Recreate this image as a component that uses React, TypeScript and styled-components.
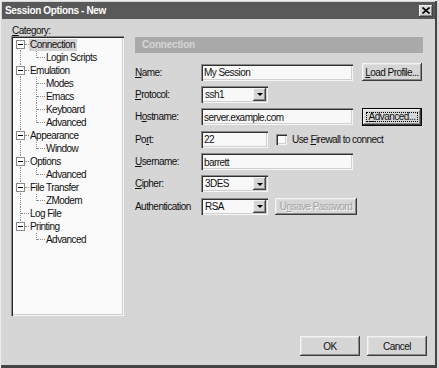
import styled, { createGlobalStyle, css } from 'styled-components';

const GlobalStyle = createGlobalStyle`
  html, body {
    margin: 0;
    background: #d8d8d8;
  }
  body {
    font-family: "Liberation Sans", Arial, sans-serif;
    font-size: 10px;
    letter-spacing: -0.55px;
    color: #101010;
  }
`;

const Window = styled.div`
  box-sizing: border-box;
  width: 437px;
  height: 368px;
  padding: 2px 2px 3px 2px;
  display: flex;
  flex-direction: column;
  background: #d6d6d6;
  box-shadow: inset 1px 1px 0 #ededed, inset -2px -3px 0 #444444;
`;

const TitleBar = styled.div`
  height: 17px;
  flex: none;
  display: flex;
  align-items: center;
  justify-content: space-between;
  padding: 0 2px 0 3px;
  background: #595959;
  color: #ffffff;
  font-weight: bold;
  font-size: 10px;
  letter-spacing: -0.35px;
`;

const CloseButton = styled.span`
  width: 14px;
  height: 12px;
  display: flex;
  align-items: center;
  justify-content: center;
  background: #d6d6d6;
  box-shadow: inset -1px -1px 0 #404040, inset 1px 1px 0 #f4f4f4, inset -2px -2px 0 #8a8a8a;
`;

const Body = styled.div`
  flex: 1;
  display: flex;
  flex-direction: column;
  padding: 7px 0 0 9px;
`;

const Main = styled.div`
  display: flex;
  gap: 11px;
`;

const LeftCol = styled.div`
  width: 113px;
  display: flex;
  flex-direction: column;
`;

const CategoryLabel = styled.div`
  line-height: 10px;
  height: 10px;
  padding-left: 1px;
`;

const TreeBox = styled.div`
  box-sizing: border-box;
  height: 280px;
  padding: 2px;
  background: #fafafa;
  box-shadow: inset 1px 1px 0 #8a8a8a, inset 2px 2px 0 #282828, inset -1px -1px 0 #f6f6f6,
    inset -2px -2px 0 #d0d0d0;
`;

const TreeRow = styled.div`
  height: 13px;
  display: flex;
  align-items: center;
`;

type CellKind = 'pipe' | 'tee' | 'elbow' | 'blank' | 'boxFirst' | 'boxMid' | 'boxLast';

const dot = '#8c8c8c';

const Cell = styled.span<{ $kind: CellKind }>`
  position: relative;
  flex: none;
  width: 16px;
  height: 13px;

  &::before {
    content: '';
    position: absolute;
    left: 7px;
    border-left: 1px dotted ${dot};
    display: ${(p) => (p.$kind === 'blank' ? 'none' : 'block')};
    top: ${(p) => (p.$kind === 'boxFirst' ? '6px' : '0')};
    bottom: ${(p) => (p.$kind === 'elbow' || p.$kind === 'boxLast' ? '6px' : '0')};
  }

  &::after {
    content: '';
    position: absolute;
    top: 6px;
    right: 0;
    left: ${(p) => (p.$kind.startsWith('box') ? '12px' : '8px')};
    border-top: 1px dotted ${dot};
    display: ${(p) => (p.$kind === 'pipe' || p.$kind === 'blank' ? 'none' : 'block')};
  }
`;

const Expander = styled.span`
  position: absolute;
  left: 3px;
  top: 2px;
  width: 9px;
  height: 9px;
  box-sizing: border-box;
  border: 1px solid #8a8a8a;
  background: #ffffff;

  &::after {
    content: '';
    position: absolute;
    left: 1px;
    right: 1px;
    top: 3px;
    height: 1px;
    background: #000;
  }
`;

const TreeText = styled.span<{ $selected?: boolean }>`
  padding: 0 2px 0 1px;
  line-height: 12px;
  white-space: nowrap;
  ${(p) =>
    p.$selected &&
    css`
      background: #d2d2d2;
    `}
`;

const RightCol = styled.div`
  width: 288px;
  padding-top: 11px;
`;

const HeaderBand = styled.div`
  height: 16px;
  line-height: 16px;
  padding-left: 7px;
  background: #a9a9a9;
  color: #d6d6d6;
  font-weight: bold;
  font-size: 10px;
  letter-spacing: -0.2px;
`;

const Form = styled.div`
  margin-top: 10px;
  display: grid;
  grid-template-columns: 66px 1fr;
  grid-auto-rows: 18px;
  row-gap: 4.4px;
  align-items: center;
`;

const Label = styled.div`
  white-space: nowrap;
`;

const Controls = styled.div<{ $gap?: number }>`
  display: flex;
  align-items: center;
  gap: ${(p) => p.$gap ?? 9}px;
  height: 18px;
`;

const sunken = css`
  box-sizing: border-box;
  background: #f8f8f8;
  box-shadow: inset 1px 1px 0 #8a8a8a, inset 2px 2px 0 #303030, inset -1px -1px 0 #f6f6f6,
    inset -2px -2px 0 #d0d0d0;
`;

const TextBox = styled.input<{ $w: number }>`
  ${sunken};
  width: ${(p) => p.$w}px;
  height: 17px;
  border: none;
  outline: none;
  margin: 0;
  padding: 1px 3px 0 3px;
  font: inherit;
  letter-spacing: inherit;
  color: #101010;
`;

const SelectBox = styled.div`
  ${sunken};
  width: 67px;
  height: 17px;
  display: flex;
  align-items: center;
  justify-content: space-between;
  padding: 2px 2px 2px 4px;
`;

const DropButton = styled.span`
  width: 13px;
  height: 13px;
  display: flex;
  align-items: center;
  justify-content: center;
  background: #d6d6d6;
  box-shadow: inset -1px -1px 0 #404040, inset 1px 1px 0 #f2f2f2, inset -2px -2px 0 #8a8a8a;

  &::after {
    content: '';
    border-left: 3px solid transparent;
    border-right: 3px solid transparent;
    border-top: 3px solid #000;
    margin-top: 1px;
  }
`;

const Button = styled.button<{ $w: number; $h?: number; $focused?: boolean }>`
  position: relative;
  box-sizing: border-box;
  width: ${(p) => p.$w}px;
  height: ${(p) => p.$h ?? 18}px;
  margin: 0;
  padding: 0;
  border: none;
  background: #d6d6d6;
  font: inherit;
  letter-spacing: inherit;
  white-space: nowrap;
  color: #101010;
  box-shadow: inset -1px -1px 0 #3c3c3c, inset 1px 1px 0 #f4f4f4, inset -2px -2px 0 #8a8a8a,
    inset 2px 2px 0 #e2e2e2;

  ${(p) =>
    p.$focused &&
    css`
      border: 1px solid #000;
      &::after {
        content: '';
        position: absolute;
        inset: 3px;
        border: 1px dotted #000;
      }
    `}

  &:disabled {
    color: #a2a2a2;
    text-shadow: 1px 1px 0 #f4f4f4;
  }
`;

const CheckBox = styled.span`
  ${sunken};
  flex: none;
  width: 11px;
  height: 11px;
  background: #fafafa;
`;

const CheckWrap = styled.div`
  display: flex;
  align-items: center;
  gap: 5px;
  white-space: nowrap;
`;

const Footer = styled.div`
  margin-top: 20px;
  margin-right: 8px;
  display: flex;
  justify-content: flex-end;
  gap: 7px;
`;

const tree: { label: string; cells: CellKind[]; selected?: boolean }[] = [
  { label: 'Connection', cells: ['boxFirst'], selected: true },
  { label: 'Login Scripts', cells: ['pipe', 'elbow'] },
  { label: 'Emulation', cells: ['boxMid'] },
  { label: 'Modes', cells: ['pipe', 'tee'] },
  { label: 'Emacs', cells: ['pipe', 'tee'] },
  { label: 'Keyboard', cells: ['pipe', 'tee'] },
  { label: 'Advanced', cells: ['pipe', 'elbow'] },
  { label: 'Appearance', cells: ['boxMid'] },
  { label: 'Window', cells: ['pipe', 'elbow'] },
  { label: 'Options', cells: ['boxMid'] },
  { label: 'Advanced', cells: ['pipe', 'elbow'] },
  { label: 'File Transfer', cells: ['boxMid'] },
  { label: 'ZModem', cells: ['pipe', 'elbow'] },
  { label: 'Log File', cells: ['tee'] },
  { label: 'Printing', cells: ['boxLast'] },
  { label: 'Advanced', cells: ['blank', 'elbow'] },
];

const Select = ({ value }: { value: string }) => (
  <SelectBox>
    <span>{value}</span>
    <DropButton />
  </SelectBox>
);

const App = () => {
  return (
    <>
      <GlobalStyle />
      <Window>
        <TitleBar>
          <span>Session Options - New</span>
          <CloseButton>
            <svg width="8" height="7" viewBox="0 0 8 7">
              <path d="M0.5 0.5 L7.5 6.5 M7.5 0.5 L0.5 6.5" stroke="#000" strokeWidth="1.6" />
            </svg>
          </CloseButton>
        </TitleBar>
        <Body>
          <Main>
            <LeftCol>
              <CategoryLabel>
                <u>C</u>ategory:
              </CategoryLabel>
              <TreeBox>
                {tree.map((item, i) => (
                  <TreeRow key={i}>
                    {item.cells.map((kind, j) => (
                      <Cell key={j} $kind={kind}>
                        {kind.startsWith('box') && <Expander />}
                      </Cell>
                    ))}
                    <TreeText $selected={item.selected}>{item.label}</TreeText>
                  </TreeRow>
                ))}
              </TreeBox>
            </LeftCol>
            <RightCol>
              <HeaderBand>Connection</HeaderBand>
              <Form>
                <Label>
                  <u>N</u>ame:
                </Label>
                <Controls>
                  <TextBox $w={152} defaultValue="My Session" readOnly />
                  <Button $w={60}>
                    <u>L</u>oad Profile...
                  </Button>
                </Controls>

                <Label>
                  <u>P</u>rotocol:
                </Label>
                <Controls>
                  <Select value="ssh1" />
                </Controls>

                <Label>
                  H<u>o</u>stname:
                </Label>
                <Controls>
                  <TextBox $w={152} defaultValue="server.example.com" readOnly />
                  <Button $w={60} $focused>
                    <u>A</u>dvanced...
                  </Button>
                </Controls>

                <Label>
                  Po<u>r</u>t:
                </Label>
                <Controls $gap={8}>
                  <TextBox $w={67} defaultValue="22" readOnly />
                  <CheckWrap>
                    <CheckBox />
                    <span>
                      Use <u>F</u>irewall to connect
                    </span>
                  </CheckWrap>
                </Controls>

                <Label>
                  <u>U</u>sername:
                </Label>
                <Controls>
                  <TextBox $w={152} defaultValue="barrett" readOnly />
                </Controls>

                <Label>
                  <u>C</u>ipher:
                </Label>
                <Controls>
                  <Select value="3DES" />
                </Controls>

                <Label>Authentication</Label>
                <Controls $gap={7}>
                  <Select value="RSA" />
                  <Button $w={82} $h={17} disabled>
                    U<u>n</u>save Password
                  </Button>
                </Controls>
              </Form>
            </RightCol>
          </Main>
          <Footer>
            <Button $w={60} $h={20}>
              OK
            </Button>
            <Button $w={60} $h={20}>
              Cancel
            </Button>
          </Footer>
        </Body>
      </Window>
    </>
  );
};

export default App;
